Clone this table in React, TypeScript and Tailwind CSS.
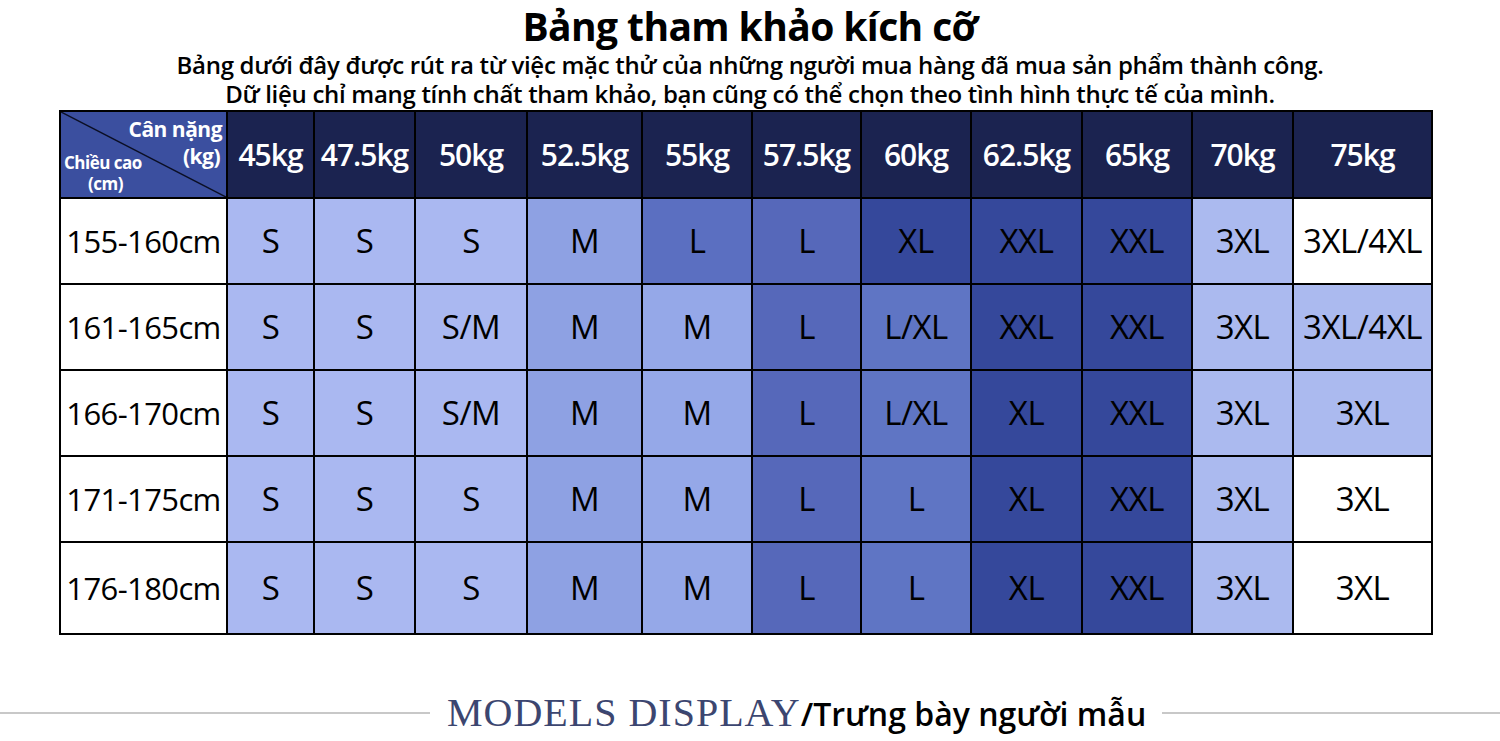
import React from 'react';

const cols = ['45kg', '47.5kg', '50kg', '52.5kg', '55kg', '57.5kg', '60kg', '62.5kg', '65kg', '70kg', '75kg'];

// colour keys for each size cell
const tone: Record<string, string> = {
  s: 'bg-[#aab8f1]',
  m: 'bg-[#8ea1e3]',
  m2: 'bg-[#95a8e8]',
  l1: 'bg-[#5b6fc1]',
  l: 'bg-[#5668ba]',
  lx: 'bg-[#5f75c4]',
  d: 'bg-[#35489b]',
  x3: 'bg-[#abbaef]',
  w: 'bg-white',
};

type Cell = [string, string];

const rows: { h: string; cells: Cell[] }[] = [
  {
    h: '155-160cm',
    cells: [['S', 's'], ['S', 's'], ['S', 's'], ['M', 'm'], ['L', 'l1'], ['L', 'l'], ['XL', 'd'], ['XXL', 'd'], ['XXL', 'd'], ['3XL', 'x3'], ['3XL/4XL', 'w']],
  },
  {
    h: '161-165cm',
    cells: [['S', 's'], ['S', 's'], ['S/M', 's'], ['M', 'm'], ['M', 'm2'], ['L', 'l'], ['L/XL', 'lx'], ['XXL', 'd'], ['XXL', 'd'], ['3XL', 'x3'], ['3XL/4XL', 'x3']],
  },
  {
    h: '166-170cm',
    cells: [['S', 's'], ['S', 's'], ['S/M', 's'], ['M', 'm'], ['M', 'm2'], ['L', 'l'], ['L/XL', 'lx'], ['XL', 'd'], ['XXL', 'd'], ['3XL', 'x3'], ['3XL', 'x3']],
  },
  {
    h: '171-175cm',
    cells: [['S', 's'], ['S', 's'], ['S', 's'], ['M', 'm'], ['M', 'm2'], ['L', 'l'], ['L', 'lx'], ['XL', 'd'], ['XXL', 'd'], ['3XL', 'x3'], ['3XL', 'w']],
  },
  {
    h: '176-180cm',
    cells: [['S', 's'], ['S', 's'], ['S', 's'], ['M', 'm'], ['M', 'm2'], ['L', 'l'], ['L', 'lx'], ['XL', 'd'], ['XXL', 'd'], ['3XL', 'x3'], ['3XL', 'w']],
  },
];

const grid =
  'grid grid-cols-[167px_87px_101px_112px_115px_110px_109px_110px_111px_110px_101px_137px]';

function Corner() {
  return (
    <div className="relative h-full bg-[#3b4f9f] text-white font-bold leading-none">
      <svg className="absolute inset-0 h-full w-full" viewBox="0 0 100 100" preserveAspectRatio="none">
        <line x1="0" y1="0" x2="100" y2="100" stroke="#0b0f24" strokeWidth="1.5" vectorEffect="non-scaling-stroke" />
      </svg>
      <div className="absolute right-[4px] top-[4px] text-right text-[21px] leading-[27px] tracking-[-0.5px]">
        Cân nặng
        <div className="pr-[2px]">(kg)</div>
      </div>
      <div className="absolute left-[3px] top-[40px] text-[17px] leading-[21px] tracking-[-0.5px]">
        Chiều cao
        <div className="pl-[24px]">(cm)</div>
      </div>
    </div>
  );
}

export default function App() {
  return (
    <div className="h-[741px] w-[1500px] overflow-hidden bg-white font-['Open_Sans','Noto_Sans',sans-serif] text-black">
      <div className="flex flex-col items-center pt-[2px]">
        <h1 className="text-[39px] font-bold leading-[48px] tracking-[-0.6px]">Bảng tham khảo kích cỡ</h1>
        <p className="text-[24px] font-semibold leading-[29px] tracking-[-0.3px]">
          Bảng dưới đây được rút ra từ việc mặc thử của những người mua hàng đã mua sản phẩm thành công.
        </p>
        <p className="text-[24px] font-semibold leading-[29px] tracking-[-0.3px]">
          Dữ liệu chỉ mang tính chất tham khảo, bạn cũng có thể chọn theo tình hình thực tế của mình.
        </p>
      </div>

      <div className="ml-[59px] mt-[2px] w-[1374px] border-2 border-black">
        <div className={`${grid} h-[85px] bg-[#1b2350]`}>
          <div className="border-r-2 border-black">
            <Corner />
          </div>
          {cols.map((c, i) => (
            <div
              key={c}
              className={`flex items-center justify-center text-[30px] font-semibold tracking-[-1px] text-white ${
                i < cols.length - 1 ? 'border-r-2 border-black' : ''
              }`}
            >
              {c}
            </div>
          ))}
        </div>
        {rows.map((r, ri) => (
          <div key={r.h} className={`${grid} ${ri === rows.length - 1 ? 'h-[92px]' : 'h-[86px]'} border-t-2 border-black`}>
            <div className="flex items-center justify-center border-r-2 border-black bg-white text-[31px] tracking-[-0.6px]">
              {r.h}
            </div>
            {r.cells.map(([t, k], ci) => (
              <div
                key={ci}
                className={`flex items-center justify-center text-[33px] tracking-[-0.5px] ${tone[k]} ${
                  ci < r.cells.length - 1 ? 'border-r-2 border-black' : ''
                }`}
              >
                {t}
              </div>
            ))}
          </div>
        ))}
      </div>

      <div className="mt-[56px] flex h-[44px] items-center">
        <div className="h-[2px] w-[430px] bg-[#c8c8c8]" />
        <div className="ml-[17px] mr-[16px] flex items-baseline whitespace-nowrap leading-none">
          <span className="font-['Liberation_Serif',serif] text-[40px] tracking-[1px] text-[#3c4670]">MODELS DISPLAY</span>
          <span className="text-[32px] font-semibold">/Trưng bày người mẫu</span>
        </div>
        <div className="h-[2px] flex-1 bg-[#c8c8c8]" />
      </div>
    </div>
  );
}
